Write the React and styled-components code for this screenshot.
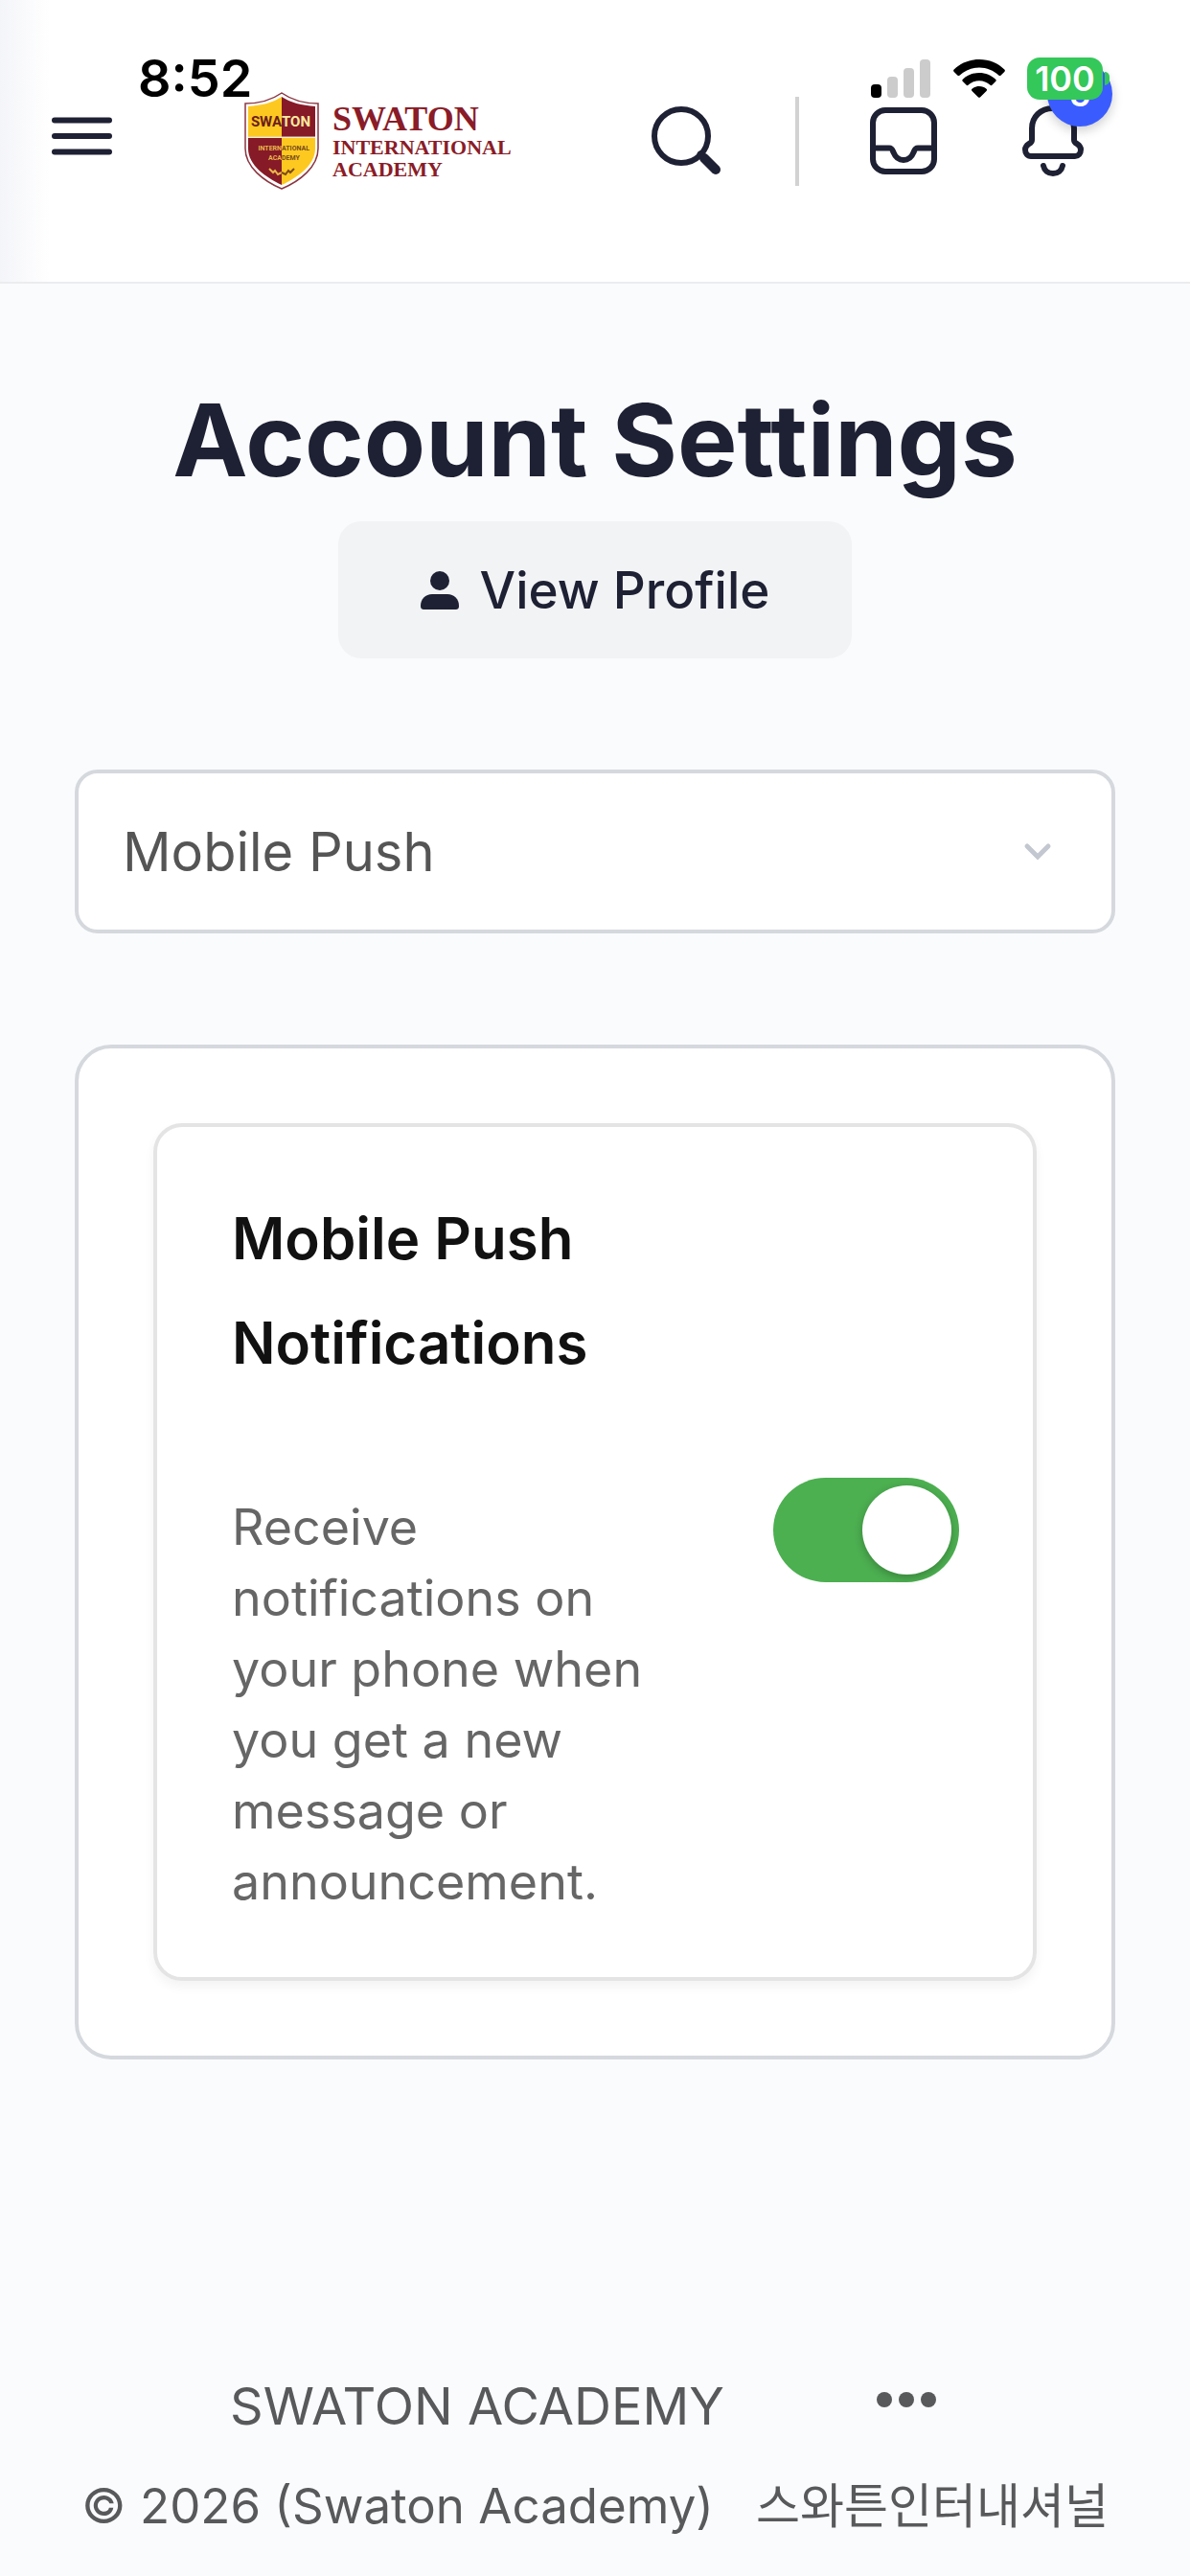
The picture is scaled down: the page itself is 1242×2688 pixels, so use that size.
import React, { useState } from 'react';
import styled, { createGlobalStyle } from 'styled-components';

const GlobalStyle = createGlobalStyle`
    *, *::before, *::after {
        box-sizing: border-box;
    }
    body {
        margin: 0;
        background: #fafbfd;
        font-family: Inter, "Noto Sans CJK KR", sans-serif;
        color: #1e2033;
    }
    button, select {
        font-family: inherit;
    }
`;

const Page = styled.div`
    position: relative;
    min-height: 100vh;
    display: flex;
    flex-direction: column;
`;

/* phone status bar, lies over the page header */
const StatusBar = styled.div`
    position: absolute;
    top: 50px;
    left: 0;
    right: 0;
    z-index: 2;
    height: 64px;
    padding: 0 84px 0 144px;
    display: flex;
    align-items: center;
    justify-content: space-between;
    color: #000;
    pointer-events: none;
`;
const Clock = styled.span`
    font-size: 54px;
    font-weight: 600;
    line-height: 64px;
`;
const StatusIcons = styled.div`
    display: flex;
    align-items: center;
    gap: 23px;
`;
const Battery = styled.div`
    display: flex;
    align-items: center;
    gap: 2px;
`;
const BatteryLevel = styled.span`
    width: 79px;
    height: 44px;
    border-radius: 13px;
    background: #34c759;
    color: #fff;
    font-size: 36px;
    font-weight: 600;
    line-height: 44px;
    text-align: center;
`;
const BatteryTip = styled.span`
    width: 5px;
    height: 14px;
    border-radius: 0 5px 5px 0;
    background: #34c759;
`;

const Header = styled.header`
    height: 296px;
    padding: 0 111px 0 48px;
    display: flex;
    align-items: center;
    justify-content: space-between;
    background: linear-gradient(to right, #f4f5f9 0, #fff 52px);
    border-bottom: 2px solid #ebecef;
`;
const HeaderGroup = styled.div`
    display: flex;
    align-items: center;
    gap: ${props => props.gap}px;
`;
const IconButton = styled.button`
    position: relative;
    display: flex;
    padding: 0;
    border: 0;
    background: none;
    color: #1e2033;
`;
const Divider = styled.span`
    width: 4px;
    height: 93px;
    background: #d2d2d2;
`;
const Badge = styled.span`
    position: absolute;
    top: -46px;
    right: -30px;
    width: 68px;
    height: 68px;
    border-radius: 50%;
    background: #3a5cff;
    box-shadow: 0 4px 12px rgba(0, 0, 0, .2);
    color: #fff;
    font-size: 36px;
    font-weight: 600;
    line-height: 68px;
    text-align: center;
`;

const Logo = styled.a`
    display: flex;
    align-items: center;
    gap: 14px;
    color: #8a1c28;
    text-decoration: none;
`;
const LogoText = styled.span`
    display: flex;
    flex-direction: column;
    font-family: "Liberation Serif", serif;
    font-weight: 700;
    font-size: 22px;
    line-height: 23px;
`;
const LogoName = styled.span`
    font-size: 36px;
    line-height: 36px;
`;

const Main = styled.main`
    flex: 1;
    padding: 96px 78px 0;
    display: flex;
    flex-direction: column;
    align-items: center;
`;
const Title = styled.h1`
    margin: 0 0 18px;
    font-size: 105px;
    font-weight: 700;
    line-height: 134px;
    text-align: center;
`;
const ProfileLink = styled.a`
    height: 143px;
    padding: 0 86px;
    display: flex;
    align-items: center;
    gap: 22px;
    border-radius: 24px;
    background: #f2f3f5;
    color: #1e2033;
    font-size: 53px;
    font-weight: 500;
    line-height: 74px;
    text-decoration: none;
`;
const SelectWrap = styled.div`
    width: 100%;
    margin: 116px 0;
    display: grid;
    align-items: center;

    > * {
        grid-area: 1 / 1;
    }
    svg {
        justify-self: end;
        margin-right: 66px;
        pointer-events: none;
    }
`;
const Select = styled.select`
    width: 100%;
    height: 171px;
    padding: 0 46px;
    appearance: none;
    border: 4px solid #d5d8dd;
    border-radius: 24px;
    background: #fff;
    color: #555;
    font-size: 56px;
`;
const Panel = styled.section`
    width: 100%;
    padding: 78px;
    border: 4px solid #d5d8dd;
    border-radius: 38px;
    background: #fff;
`;
const Card = styled.div`
    padding: 62px 77px 62px 78px;
    border: 4px solid #e4e4e4;
    border-radius: 30px;
    box-shadow: 0 6px 12px rgba(0, 0, 0, .05);
`;
const CardTitle = styled.h2`
    max-width: 480px;
    margin: 0 0 86px;
    color: #111;
    font-size: 60px;
    font-weight: 600;
    line-height: 109px;
`;
const Setting = styled.div`
    display: flex;
    align-items: flex-start;
    justify-content: space-between;
`;
const Description = styled.label`
    max-width: 450px;
    padding-top: 15px;
    color: #666;
    font-size: 52px;
    line-height: 74px;
`;
const Switch = styled.input`
    appearance: none;
    flex: none;
    width: 194px;
    height: 109px;
    margin: 0;
    padding: 8px;
    display: flex;
    justify-content: flex-start;
    border-radius: 55px;
    background: #ccc;

    &::before {
        content: "";
        width: 93px;
        height: 93px;
        border-radius: 50%;
        background: #fff;
        box-shadow: 0 3px 8px rgba(0, 0, 0, .25);
    }
    &:checked {
        justify-content: flex-end;
        background: #4caf50;
    }
`;

const Footer = styled.footer`
    padding: 0 78px 36px;
    color: #58595b;
    font-size: 51px;
    line-height: 74px;
`;
const FooterNav = styled.nav`
    display: flex;
    align-items: center;
    justify-content: center;
    gap: 158px;
    padding: 0 24px 30px 0;
`;
const FooterLink = styled.a`
    color: inherit;
    font-size: 54px;
    text-decoration: none;
`;
const Copyright = styled.div`
    display: flex;
    align-items: baseline;
    justify-content: center;
    gap: 44px;
    white-space: nowrap;
`;
const Korean = styled.span`
    font-family: "Noto Sans CJK KR", sans-serif;
    font-size: 50px;
    line-height: 60px;
`;

const Signal = () => (
    <svg width="63" height="40" viewBox="0 0 63 40">
        <rect x="0" y="26" width="11" height="14" rx="4" fill="#000" />
        <rect x="17" y="18" width="11" height="22" rx="4" fill="#ccc" />
        <rect x="34" y="9" width="11" height="31" rx="4" fill="#ccc" />
        <rect x="51" y="0" width="11" height="40" rx="4" fill="#ccc" />
    </svg>
);

const Wifi = () => (
    <svg width="54" height="40" viewBox="0 0 54 40">
        <path d="M27 0C16.600 0 7.200 4 .7 10.500c-.8.800-.8 1.600 0 2.400l3.600 3.600c.8.800 1.600.7 2.400 0C12 11.500 19.100 8.500 27 8.500s15 3 20.300 8c.8.700 1.600.8 2.400 0l3.600-3.600c.8-.8.8-1.600 0-2.400C46.800 4 37.400 0 27 0z" />
        <path d="M27 14c-6.600 0-12.600 2.500-17.100 6.700-.8.800-.8 1.600 0 2.400l3.500 3.500c.8.800 1.600.7 2.400 0 3-2.700 6.900-4.300 11.200-4.300s8.200 1.600 11.200 4.300c.8.700 1.600.8 2.400 0l3.500-3.500c.8-.8.8-1.600 0-2.400C39.600 16.500 33.600 14 27 14z" />
        <path d="M27 28c-2.900 0-5.500 1-7.500 2.700-.8.700-.8 1.400 0 2.200l6.300 6.300c.8.800 1.600.8 2.400 0l6.300-6.300c.8-.8.8-1.500 0-2.200C32.500 29 29.900 28 27 28z" />
    </svg>
);

const MenuIcon = () => (
    <svg width="76" height="62" viewBox="0 0 76 62" fill="none" stroke="currentColor" strokeWidth="6" strokeLinecap="round">
        <path d="M9 9.500h57M9 26h57M9 42.500h57" />
    </svg>
);

const SearchIcon = () => (
    <svg width="76" height="72" viewBox="0 0 76 72" fill="none" stroke="currentColor" strokeLinecap="round">
        <circle cx="31" cy="31" r="28" strokeWidth="6" />
        <path d="M55 54l12 12" strokeWidth="10" />
        <path d="M51 50l6 6" strokeWidth="7" />
    </svg>
);

const InboxIcon = () => (
    <svg width="70" height="70" viewBox="0 0 70 70" fill="none" stroke="currentColor" strokeWidth="6">
        <rect x="3" y="3" width="64" height="64" rx="13" />
        <path d="M3 42.500h17c3 0 3.500 2 4.500 4.500 2 5 5.500 8 10.500 8s8.500-3 10.500-8c1-2.500 1.500-4.500 4.500-4.500h17" />
    </svg>
);

const BellIcon = () => (
    <svg width="64" height="74" viewBox="0 0 64 74" fill="none" stroke="currentColor" strokeWidth="6" strokeLinecap="round" strokeLinejoin="round">
        <path d="M32 3C19 3 10 12 10 24v12c0 2-1 3-3 4-3 2-4 4-4 6 0 4 2.500 7 6 7h46c3.500 0 6-3 6-7 0-2-1-4-4-6-2-1-3-2-3-4V24C54 12 45 3 32 3z" />
        <path d="M22 63c1 5 5 8 10 8s9-3 10-8" />
    </svg>
);

const Shield = () => (
    <svg width="78" height="102" viewBox="0 0 78 102">
        <path d="M39 1C29 8 16 12 1 12v47c0 19 19 34 38 42 19-8 38-23 38-42V12C62 12 49 8 39 1z" fill="#fff" stroke="#8a3540" strokeWidth="1.500" />
        <path d="M39 5v42H4V15c14-1 26-4 35-10z" fill="#fdc921" />
        <path d="M39 5v42h35V15C60 14 48 11 39 5z" fill="#861a27" />
        <path d="M39 48v49C22 89 4 76 4 59V48z" fill="#861a27" />
        <path d="M39 48v49c17-8 35-21 35-38V48z" fill="#fdc921" />
        <path d="M4 47h70" stroke="#f5d9b0" strokeWidth="1" />
        <g fontFamily="Roboto, sans-serif" fontWeight="700">
            <text x="39" y="36" fontSize="15" textAnchor="end" fill="#6b1d1d">SWA</text>
            <text x="39" y="36" fontSize="15" fill="#fde9a0">TON</text>
            <text x="39" y="61" fontSize="7" textAnchor="end" fill="#e9b64a">INTERN</text>
            <text x="39" y="61" fontSize="7" fill="#7a4a1a">ATIONAL</text>
            <text x="39" y="71" fontSize="7" textAnchor="end" fill="#e9b64a">ACA</text>
            <text x="39" y="71" fontSize="7" fill="#7a4a1a">DEMY</text>
        </g>
        <path d="M26 80l4 4 2-2 3 4 4-2" fill="none" stroke="#e9b64a" strokeWidth="2" />
        <path d="M39 84l4 2 3-4 2 2 4-4" fill="none" stroke="#7a4a1a" strokeWidth="2" />
    </svg>
);

const UserIcon = () => (
    <svg width="40" height="40" viewBox="0 0 40 40" fill="currentColor">
        <circle cx="20" cy="10" r="10" />
        <path d="M12 24h16c7 0 12 5 12 12 0 3-1 4-4 4H4c-3 0-4-1-4-4 0-7 5-12 12-12z" />
    </svg>
);

const Chevron = () => (
    <svg width="30" height="20" viewBox="0 0 30 20" fill="none" stroke="#c3c8d0" strokeWidth="5" strokeLinecap="round">
        <path d="M4 4l11 11L26 4" />
    </svg>
);

const MoreIcon = () => (
    <svg width="64" height="32" viewBox="0 0 64 32" fill="#58595b">
        <circle cx="9" cy="9" r="8" />
        <circle cx="32" cy="9" r="8" />
        <circle cx="55" cy="9" r="8" />
    </svg>
);

const App = () => {
    const [channel, setChannel] = useState('push');
    const [enabled, setEnabled] = useState(true);

    return (
        <Page>
            <GlobalStyle />
            <StatusBar>
                <Clock>8:52</Clock>
                <StatusIcons>
                    <Signal />
                    <Wifi />
                    <Battery>
                        <BatteryLevel>100</BatteryLevel>
                        <BatteryTip />
                    </Battery>
                </StatusIcons>
            </StatusBar>
            <Header>
                <HeaderGroup gap={131}>
                    <IconButton aria-label="Menu"><MenuIcon /></IconButton>
                    <Logo href="#">
                        <Shield />
                        <LogoText>
                            <LogoName>SWATON</LogoName>
                            <span>INTERNATIONAL</span>
                            <span>ACADEMY</span>
                        </LogoText>
                    </Logo>
                </HeaderGroup>
                <HeaderGroup gap={74}>
                    <IconButton aria-label="Search"><SearchIcon /></IconButton>
                    <Divider />
                    <HeaderGroup gap={89}>
                        <IconButton aria-label="Inbox"><InboxIcon /></IconButton>
                        <IconButton aria-label="Notifications">
                            <BellIcon />
                            <Badge>5</Badge>
                        </IconButton>
                    </HeaderGroup>
                </HeaderGroup>
            </Header>
            <Main>
                <Title>Account Settings</Title>
                <ProfileLink href="#"><UserIcon />View Profile</ProfileLink>
                <SelectWrap>
                    <Select aria-label="Settings section" value={channel} onChange={e => setChannel(e.target.value)}>
                        <option value="push">Mobile Push</option>
                    </Select>
                    <Chevron />
                </SelectWrap>
                <Panel>
                    <Card>
                        <CardTitle>Mobile Push Notifications</CardTitle>
                        <Setting>
                            <Description htmlFor="push">
                                Receive notifications on your phone when you get a new message or announcement.
                            </Description>
                            <Switch id="push" type="checkbox" checked={enabled} onChange={() => setEnabled(!enabled)} />
                        </Setting>
                    </Card>
                </Panel>
            </Main>
            <Footer>
                <FooterNav>
                    <FooterLink href="#">SWATON ACADEMY</FooterLink>
                    <IconButton aria-label="More"><MoreIcon /></IconButton>
                </FooterNav>
                <Copyright>
                    <span>© 2026 (Swaton Academy)</span>
                    <Korean>스와튼인터내셔널</Korean>
                </Copyright>
            </Footer>
        </Page>
    )
}

export default App;
